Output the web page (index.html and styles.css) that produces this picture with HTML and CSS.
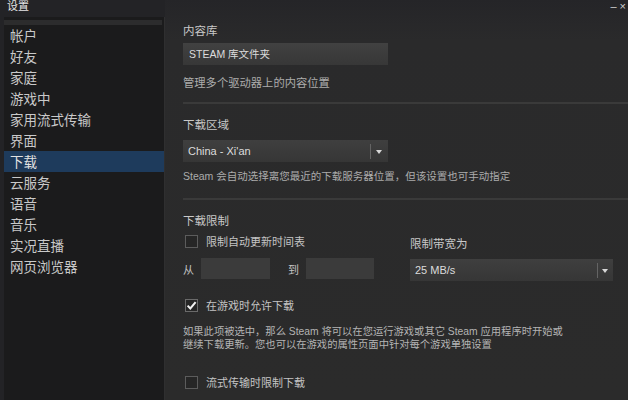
FILE: index.html
```html
<!DOCTYPE html>
<html lang="zh-CN">
<head>
<meta charset="utf-8">
<title>设置</title>
<link rel="stylesheet" href="styles.css">
</head>
<body>
<div class="window">
  <div class="left">
    <div class="title">设置</div>
    <nav class="sidebar">
      <div class="sb-head"></div>
      <ul class="menu">
        <li>帐户</li>
        <li>好友</li>
        <li>家庭</li>
        <li>游戏中</li>
        <li>家用流式传输</li>
        <li>界面</li>
        <li class="active">下载</li>
        <li>云服务</li>
        <li>语音</li>
        <li>音乐</li>
        <li>实况直播</li>
        <li>网页浏览器</li>
      </ul>
    </nav>
  </div>
  <main class="content">
    <section class="sec first">
      <div class="label">内容库</div>
      <div class="button">STEAM 库文件夹</div>
      <div class="desc">管理多个驱动器上的内容位置</div>
    </section>
    <div class="sep"></div>
    <section class="sec">
      <div class="label">下载区域</div>
      <div class="select region"><span class="val">China - Xi'an</span><span class="arrow"></span></div>
      <div class="desc d2">Steam 会自动选择离您最近的下载服务器位置，但该设置也可手动指定</div>
    </section>
    <div class="sep sep2"></div>
    <section class="sec">
      <div class="label">下载限制</div>
      <div class="limits">
        <div class="lcol">
          <div class="check"><span class="box"></span><span class="ctext">限制自动更新时间表</span></div>
          <div class="fromto">
            <span class="ft">从</span><span class="field"></span>
            <span class="ft to">到</span><span class="field f2"></span>
          </div>
        </div>
        <div class="rcol">
          <div class="label rl">限制带宽为</div>
          <div class="select bw"><span class="val">25 MB/s</span><span class="arrow"></span></div>
        </div>
      </div>
      <div class="check c2"><span class="box on"><svg viewBox="0 0 13 13" width="13" height="13"><path d="M2.6 6.6 L5.3 9.4 L10.6 3.2" fill="none" stroke="#f2f2f2" stroke-width="2"/></svg></span><span class="ctext">在游戏时允许下载</span></div>
      <p class="para">如果此项被选中，那么 Steam 将可以在您运行游戏或其它 Steam 应用程序时开始或<br>继续下载更新。您也可以在游戏的属性页面中针对每个游戏单独设置</p>
      <div class="check c3"><span class="box"></span><span class="ctext">流式传输时限制下载</span></div>
    </section>
  </main>
  <div class="winctl"><span class="min">–</span><span class="close">×</span></div>
</div>
</body>
</html>
```
FILE: styles.css
```css
* { box-sizing: border-box; }
html, body { margin: 0; padding: 0; }
body {
  width: 628px;
  height: 400px;
  overflow: hidden;
  background: #232326;
  font-family: "Liberation Sans", "Noto Sans CJK SC", sans-serif;
  color: #c4c4c4;
}
.window {
  position: relative;
  display: flex;
  width: 628px;
  height: 400px;
  overflow: hidden;
}
.left {
  width: 165px;
  padding-left: 4px;
  display: flex;
  flex-direction: column;
  background: #232326;
}
.title {
  height: 17px;
  font-size: 11px;
  line-height: 13px;
  padding-left: 3px;
  color: #e6e6e6;
}
.sidebar {
  flex: 1;
  background: #1b1b1c;
  border-right: 1px solid #2f2f30;
}
.sb-head {
  margin-top: 3px;
  height: 5px;
  background: #2c2c2d;
  margin-right: 2px;
}
.menu {
  list-style: none;
  margin: 0;
  padding: 0;
}
.menu li {
  height: 21px;
  padding-top: 3px;
  line-height: 18px;
  padding-left: 6px;
  font-size: 13.5px;
  color: #c9c9c9;
}
.menu li.active {
  background: #1e3b5c;
  color: #e2e2e2;
}
.content {
  flex: 1;
  padding-left: 18px;
  background: linear-gradient(#252528 0px, #2a2a2b 40px, #2b2b2b 100%);
}
.label {
  font-size: 11.5px;
  line-height: 16px;
  color: #c8c8c8;
}
.sec { padding-top: 13px; }
.sec.first { padding-top: 23px; }
.button {
  margin-top: 4px;
  width: 205px;
  height: 22px;
  line-height: 22px;
  padding-left: 6px;
  font-size: 10.5px;
  color: #dcdcdc;
  background: linear-gradient(#414141, #373737);
}
.desc {
  margin-top: 10px;
  font-size: 11.3px;
  line-height: 16px;
  color: #acacac;
}
.desc.d2 { margin-top: 6px; font-size: 10.5px; }
.sep {
  margin-top: 11px;
  height: 2px;
  background: #3a3a3a;
}
.sep2 { margin-top: 14px; }
.select {
  display: flex;
  align-items: center;
  height: 22px;
  background: linear-gradient(#3f3f3f, #363636);
  font-size: 11px;
  color: #dcdcdc;
}
.select .val { flex: 1; padding-left: 5px; }
.select .arrow {
  position: relative;
  width: 18px;
  height: 15px;
  border-left: 1px solid #646464;
}
.select .arrow::after {
  content: "";
  position: absolute;
  left: 5px;
  top: 6px;
  border-left: 3.5px solid transparent;
  border-right: 3.5px solid transparent;
  border-top: 4px solid #d8d8d8;
}
.region { margin-top: 7px; width: 205px; }
.limits {
  display: flex;
}
.lcol { width: 227px; }
.check {
  display: flex;
  align-items: center;
  gap: 8px;
  height: 16px;
}
.limits .check { margin-top: 4px; }
.box {
  width: 13px;
  height: 13px;
  margin-left: 2px;
  border: 1px solid #5c5c5c;
  background: #262626;
  display: inline-flex;
}
.box.on { border-color: #6a6a6a; }
.box svg { margin: -1px; }
.ctext {
  font-size: 11px;
  color: #c4c4c4;
}
.fromto {
  display: flex;
  align-items: center;
  margin-top: 9px;
}
.ft {
  width: 18px;
  font-size: 11px;
  color: #c4c4c4;
}
.ft.to { width: 18px; margin-left: 18px; }
.field {
  width: 69px;
  height: 21px;
  background: #3b3b3b;
}
.field.f2 { width: 68px; }
.rcol { padding-top: 7px; }
.bw { margin-top: 7px; width: 203px; }
.bw .arrow { width: 16px; }
.bw .arrow::after { left: 4px; }
.check.c2 { margin-top: 16px; }
.para {
  margin: 12px 0 0;
  font-size: 10.3px;
  line-height: 13px;
  color: #b4b4b4;
  white-space: nowrap;
}
.check.c3 { margin-top: 23px; }
.winctl {
  position: absolute;
  top: 0;
  right: 2px;
  display: flex;
  gap: 3px;
  font-size: 11px;
  line-height: 12px;
  color: #d0d0d0;
}
```
